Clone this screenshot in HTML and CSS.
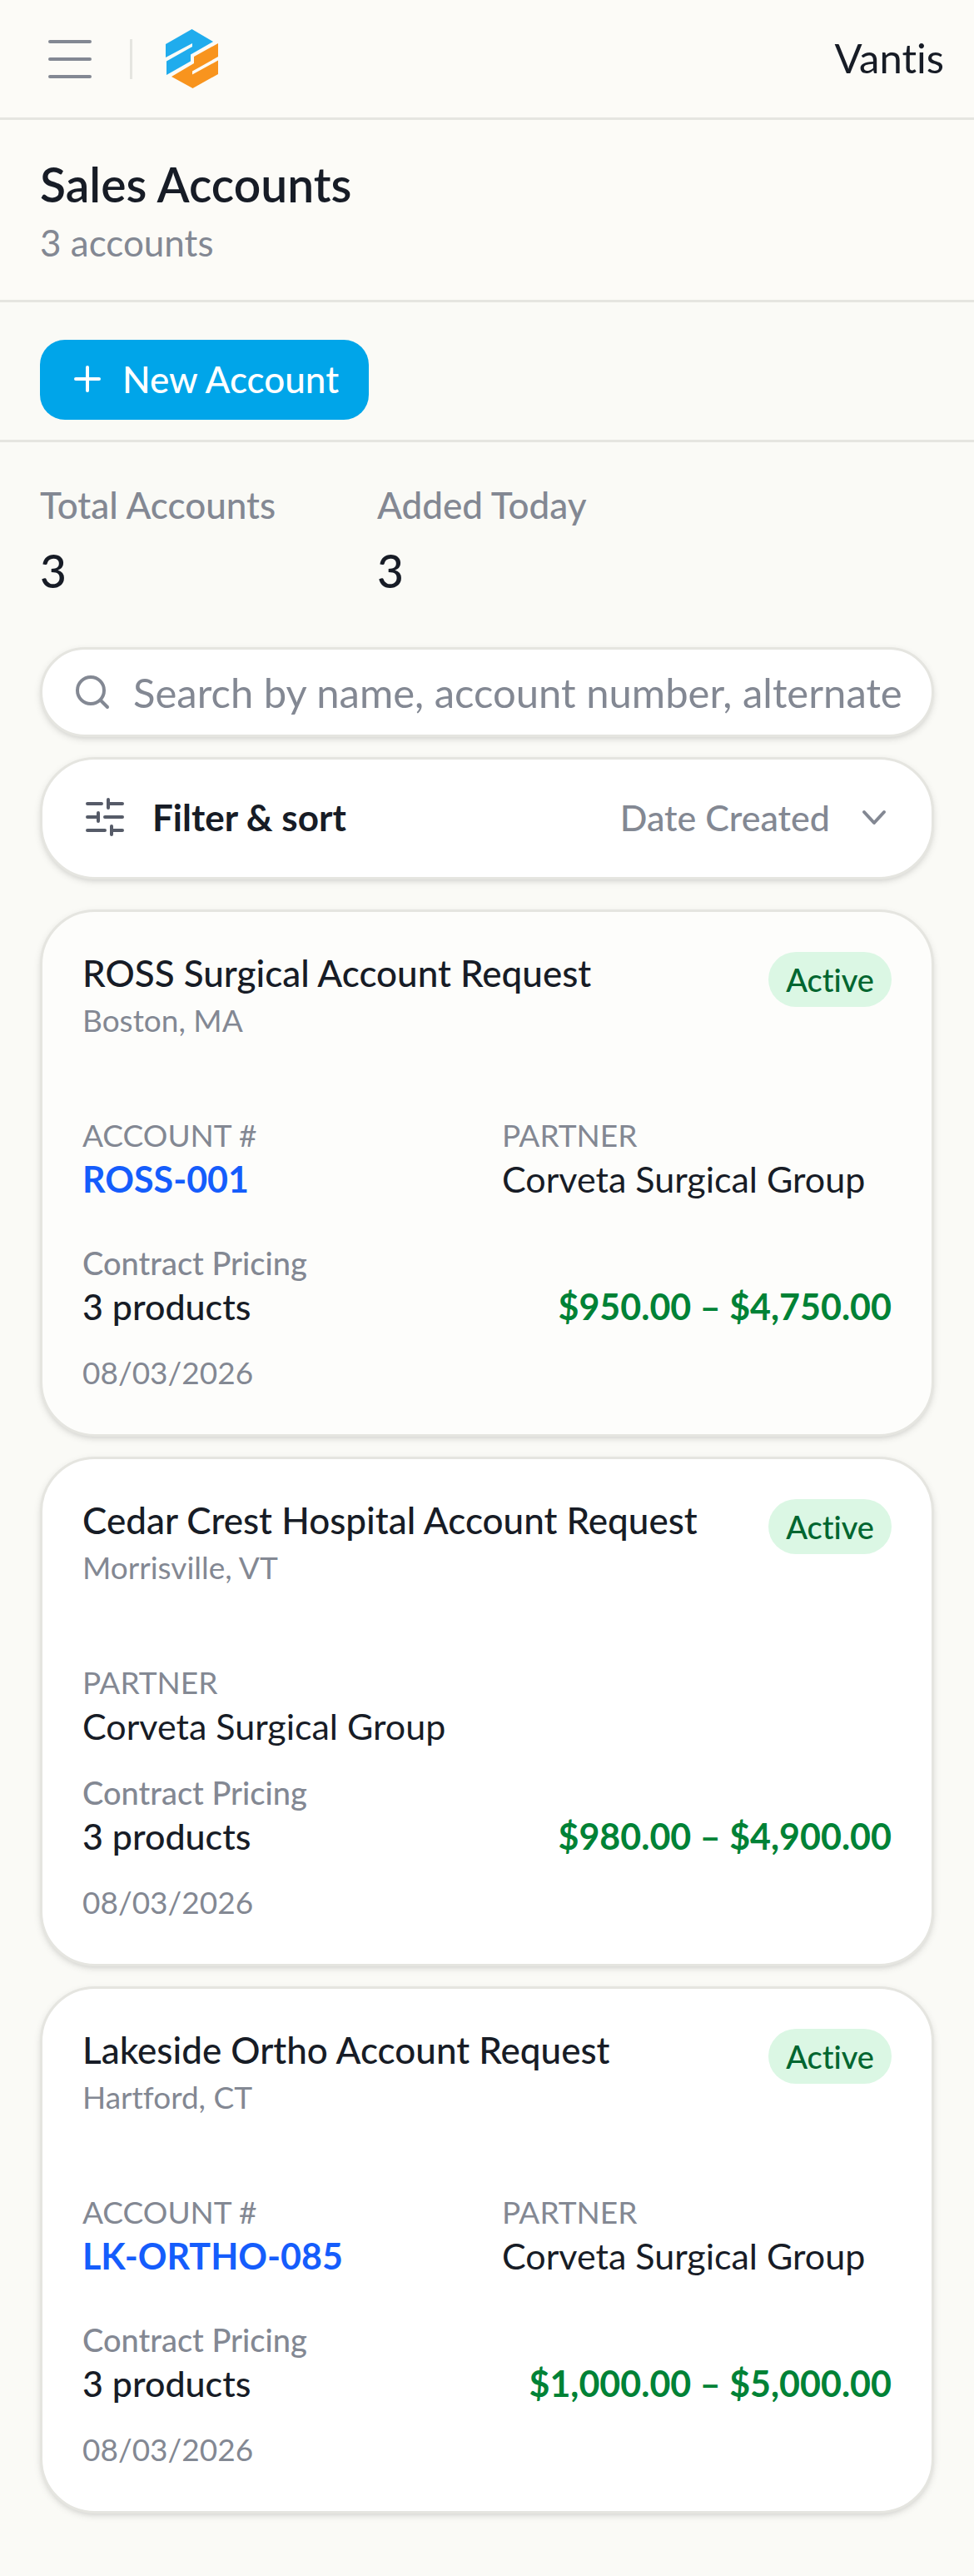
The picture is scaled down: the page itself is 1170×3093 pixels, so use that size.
FILE: index.html
```html
<!DOCTYPE html>
<html lang="en">
<head>
  <meta charset="UTF-8" />
  <meta name="viewport" content="width=device-width, initial-scale=1.0" />
  <title>Sales Accounts</title>
  <link rel="stylesheet" href="styles.css">
</head>

<body>
  <header class="topbar">
    <button type="button" class="menu-btn" aria-label="Open menu">
      <svg width="54" height="54" viewBox="0 0 54 54"><path d="M3 6h48M3 27h48M3 48h48" /></svg>
    </button>
    <span class="divider"></span>
    <a href="#" class="logo" aria-label="Home">
      <svg width="63" height="72" viewBox="0 0 63 72">
        <path fill="#20aced" d="M31.500 0 57 15 30 30.500v8L1 55V38.500l31-17.500v-4L0 34V18z" />
        <path fill="#f8941e" d="M63 17v16L32 50.500v4l31-17v16.500L32.500 71 7 57l27-16v-8z" />
      </svg>
    </a>
    <span class="company">Vantis</span>
  </header>

  <section class="page-title">
    <h1>Sales Accounts</h1>
    <p>3 accounts</p>
  </section>

  <section class="actions">
    <button type="button" class="btn">
      <svg width="36" height="36" viewBox="0 0 36 36"><path d="M18 4v28M4 18h28" /></svg>
      New Account
    </button>
  </section>

  <main>
    <div class="stats">
      <div>
        <p class="stat-label">Total Accounts</p>
        <p class="stat-value">3</p>
      </div>
      <div>
        <p class="stat-label">Added Today</p>
        <p class="stat-value">3</p>
      </div>
    </div>

    <label class="search">
      <svg width="42" height="42" viewBox="0 0 42 42"><circle cx="19" cy="19" r="16" /><path d="m31 31 8 8" /></svg>
      <input type="text" aria-label="Search accounts" placeholder="Search by name, account number, alternate names" />
    </label>

    <button type="button" class="filter">
      <svg class="sliders" width="48" height="48" viewBox="0 0 48 48"><path d="M3 8h17M28 3v10M28 8h17M3 24h13M16 19v10M24 24h21M3 40h21M32 35v10M32 40h13" /></svg>
      <span class="filter-title">Filter &amp; sort</span>
      <span class="filter-value">Date Created</span>
      <svg class="chevron" width="36" height="36" viewBox="0 0 36 36"><path d="m6 12 12 13 12-13" /></svg>
    </button>

    <div class="cards">
      <article class="card card-active">
        <div class="card-head">
          <div>
            <h2>ROSS Surgical Account Request</h2>
            <p class="place">Boston, MA</p>
          </div>
          <span class="badge">Active</span>
        </div>
        <div class="details">
          <div>
            <p class="label">ACCOUNT #</p>
            <a href="#" class="account-link">ROSS-001</a>
          </div>
          <div>
            <p class="label">PARTNER</p>
            <p class="value">Corveta Surgical Group</p>
          </div>
        </div>
        <div class="pricing">
          <div>
            <p class="label label-medium">Contract Pricing</p>
            <p class="value value-medium">3 products</p>
          </div>
          <p class="price">$950.00 – $4,750.00</p>
        </div>
        <time class="date">08/03/2026</time>
      </article>

      <article class="card">
        <div class="card-head">
          <div>
            <h2>Cedar Crest Hospital Account Request</h2>
            <p class="place">Morrisville, VT</p>
          </div>
          <span class="badge">Active</span>
        </div>
        <div class="details">
          <div>
            <p class="label">PARTNER</p>
            <p class="value">Corveta Surgical Group</p>
          </div>
        </div>
        <div class="pricing">
          <div>
            <p class="label label-medium">Contract Pricing</p>
            <p class="value value-medium">3 products</p>
          </div>
          <p class="price">$980.00 – $4,900.00</p>
        </div>
        <time class="date">08/03/2026</time>
      </article>

      <article class="card">
        <div class="card-head">
          <div>
            <h2>Lakeside Ortho Account Request</h2>
            <p class="place">Hartford, CT</p>
          </div>
          <span class="badge">Active</span>
        </div>
        <div class="details">
          <div>
            <p class="label">ACCOUNT #</p>
            <a href="#" class="account-link">LK-ORTHO-085</a>
          </div>
          <div>
            <p class="label">PARTNER</p>
            <p class="value">Corveta Surgical Group</p>
          </div>
        </div>
        <div class="pricing">
          <div>
            <p class="label label-medium">Contract Pricing</p>
            <p class="value value-medium">3 products</p>
          </div>
          <p class="price">$1,000.00 – $5,000.00</p>
        </div>
        <time class="date">08/03/2026</time>
      </article>
    </div>
  </main>
</body>
</html>
```
FILE: styles.css
```css
* {
  box-sizing: border-box;
}
body {
  margin: 0;
  font-family: Lato, "Open Sans", sans-serif;
  font-size: 44px;
  font-variant-ligatures: none;
  color: #171c26;
  background-color: #fafaf6;
}
h1, h2, p {
  margin: 0;
}
button, input {
  font-family: inherit;
  color: inherit;
}
svg {
  display: block;
  flex-shrink: 0;
  fill: none;
  stroke: currentColor;
  stroke-width: 4;
  stroke-linecap: round;
  stroke-linejoin: round;
}

/* top bar */
.topbar {
  display: flex;
  align-items: center;
  height: 144px;
  padding: 0 36px 0 57px;
  background-color: #fcfbf7;
  border-bottom: 3px solid #e5e5e0;
}
.menu-btn {
  padding: 0;
  border: none;
  background: none;
  color: #838893;
  cursor: pointer;
}
.divider {
  width: 3px;
  height: 48px;
  margin: 0 40px 0 45px;
  background-color: #e5e5e0;
}
.logo svg {
  stroke: none;
}
.company {
  margin-left: auto;
  padding-bottom: 3px;
  font-size: 49px;
}

/* page heading */
.page-title {
  padding: 41px 48px 39px;
  background-color: #fcfbf7;
  border-bottom: 3px solid #e5e5e0;
}
.page-title h1 {
  font-size: 57px;
  font-weight: 600;
  line-height: 72px;
}
.page-title p {
  margin-top: 4px;
  line-height: 60px;
  color: #838893;
}
.actions {
  padding: 45px 48px 24px;
  border-bottom: 3px solid #e5e5e0;
}
.btn {
  display: flex;
  align-items: center;
  gap: 24px;
  height: 96px;
  padding: 0 36px 3px 39px;
  border: none;
  border-radius: 30px;
  background-color: #00a5e9;
  color: #ffffff;
  font-size: 44px;
  font-weight: 500;
  cursor: pointer;
}

main {
  padding: 45px 48px 72px;
}
.stats {
  display: grid;
  grid-template-columns: 357px 357px;
  gap: 48px;
  margin-bottom: 56px;
}
.stat-label {
  line-height: 60px;
  font-weight: 500;
  color: #838893;
}
.stat-value {
  margin-top: 13px;
  font-size: 55px;
  font-weight: 500;
  line-height: 72px;
}

/* search and filter */
.search, .filter, .card {
  border: 3px solid #e5e5e0;
  background-color: #ffffff;
  box-shadow: 0 3px 9px rgba(0, 0, 0, 0.1), 0 3px 6px -3px rgba(0, 0, 0, 0.1);
}
.search {
  display: flex;
  align-items: center;
  gap: 28px;
  height: 108px;
  padding: 0 36px 0 39px;
  border-radius: 54px;
  color: #838893;
}
.search input {
  flex: 1;
  min-width: 0;
  padding: 0;
  border: none;
  outline: none;
  background: none;
  font-size: 49px;
}
.search input::placeholder {
  color: #838893;
}
.filter {
  display: flex;
  align-items: center;
  width: 100%;
  height: 147px;
  margin: 24px 0 36px;
  padding: 0 51px 3px;
  border-radius: 66px;
  cursor: pointer;
}
.sliders {
  color: #565b68;
}
.filter-title {
  margin-left: 33px;
  font-size: 44px;
  font-weight: 700;
}
.filter-value {
  margin-left: auto;
  font-size: 43px;
  font-weight: 500;
  color: #838893;
}
.chevron {
  margin-left: 35px;
  color: #838893;
}

/* account cards */
.cards {
  display: flex;
  flex-direction: column;
  gap: 24px;
}
.card {
  padding: 48px 48px 50px;
  border-radius: 66px;
}
.card-active {
  background-color: #fdfdfb;
}
.card-head {
  display: flex;
  justify-content: space-between;
  align-items: flex-start;
}
.card h2 {
  font-size: 44px;
  font-weight: 500;
  line-height: 50px;
}
.place {
  margin-top: 8px;
  font-size: 37px;
  line-height: 48px;
  color: #838893;
}
.badge {
  padding: 0 21px;
  border-radius: 33px;
  background-color: #dbf7e4;
  color: #016630;
  font-size: 38px;
  font-weight: 500;
  line-height: 66px;
}
.details {
  display: grid;
  grid-template-columns: 1fr 1fr;
  gap: 36px;
  margin-top: 89px;
}
.label {
  font-size: 37px;
  line-height: 50px;
  color: #838893;
}
.value, .account-link, .price {
  font-size: 43px;
  line-height: 56px;
}
.label-medium {
  font-size: 38px;
  font-weight: 500;
}
.value-medium {
  font-weight: 500;
}
.account-link {
  display: block;
  margin-bottom: 21px;
  font-weight: 700;
  color: #155dfc;
  text-decoration: none;
}
.account-link:hover {
  text-decoration: underline;
}
.pricing {
  display: flex;
  justify-content: space-between;
  align-items: flex-end;
  margin-top: 26px;
}
.price {
  font-weight: 700;
  color: #008236;
}
.date {
  display: block;
  margin-top: 27px;
  font-size: 37px;
  line-height: 48px;
  color: #838893;
}
```
